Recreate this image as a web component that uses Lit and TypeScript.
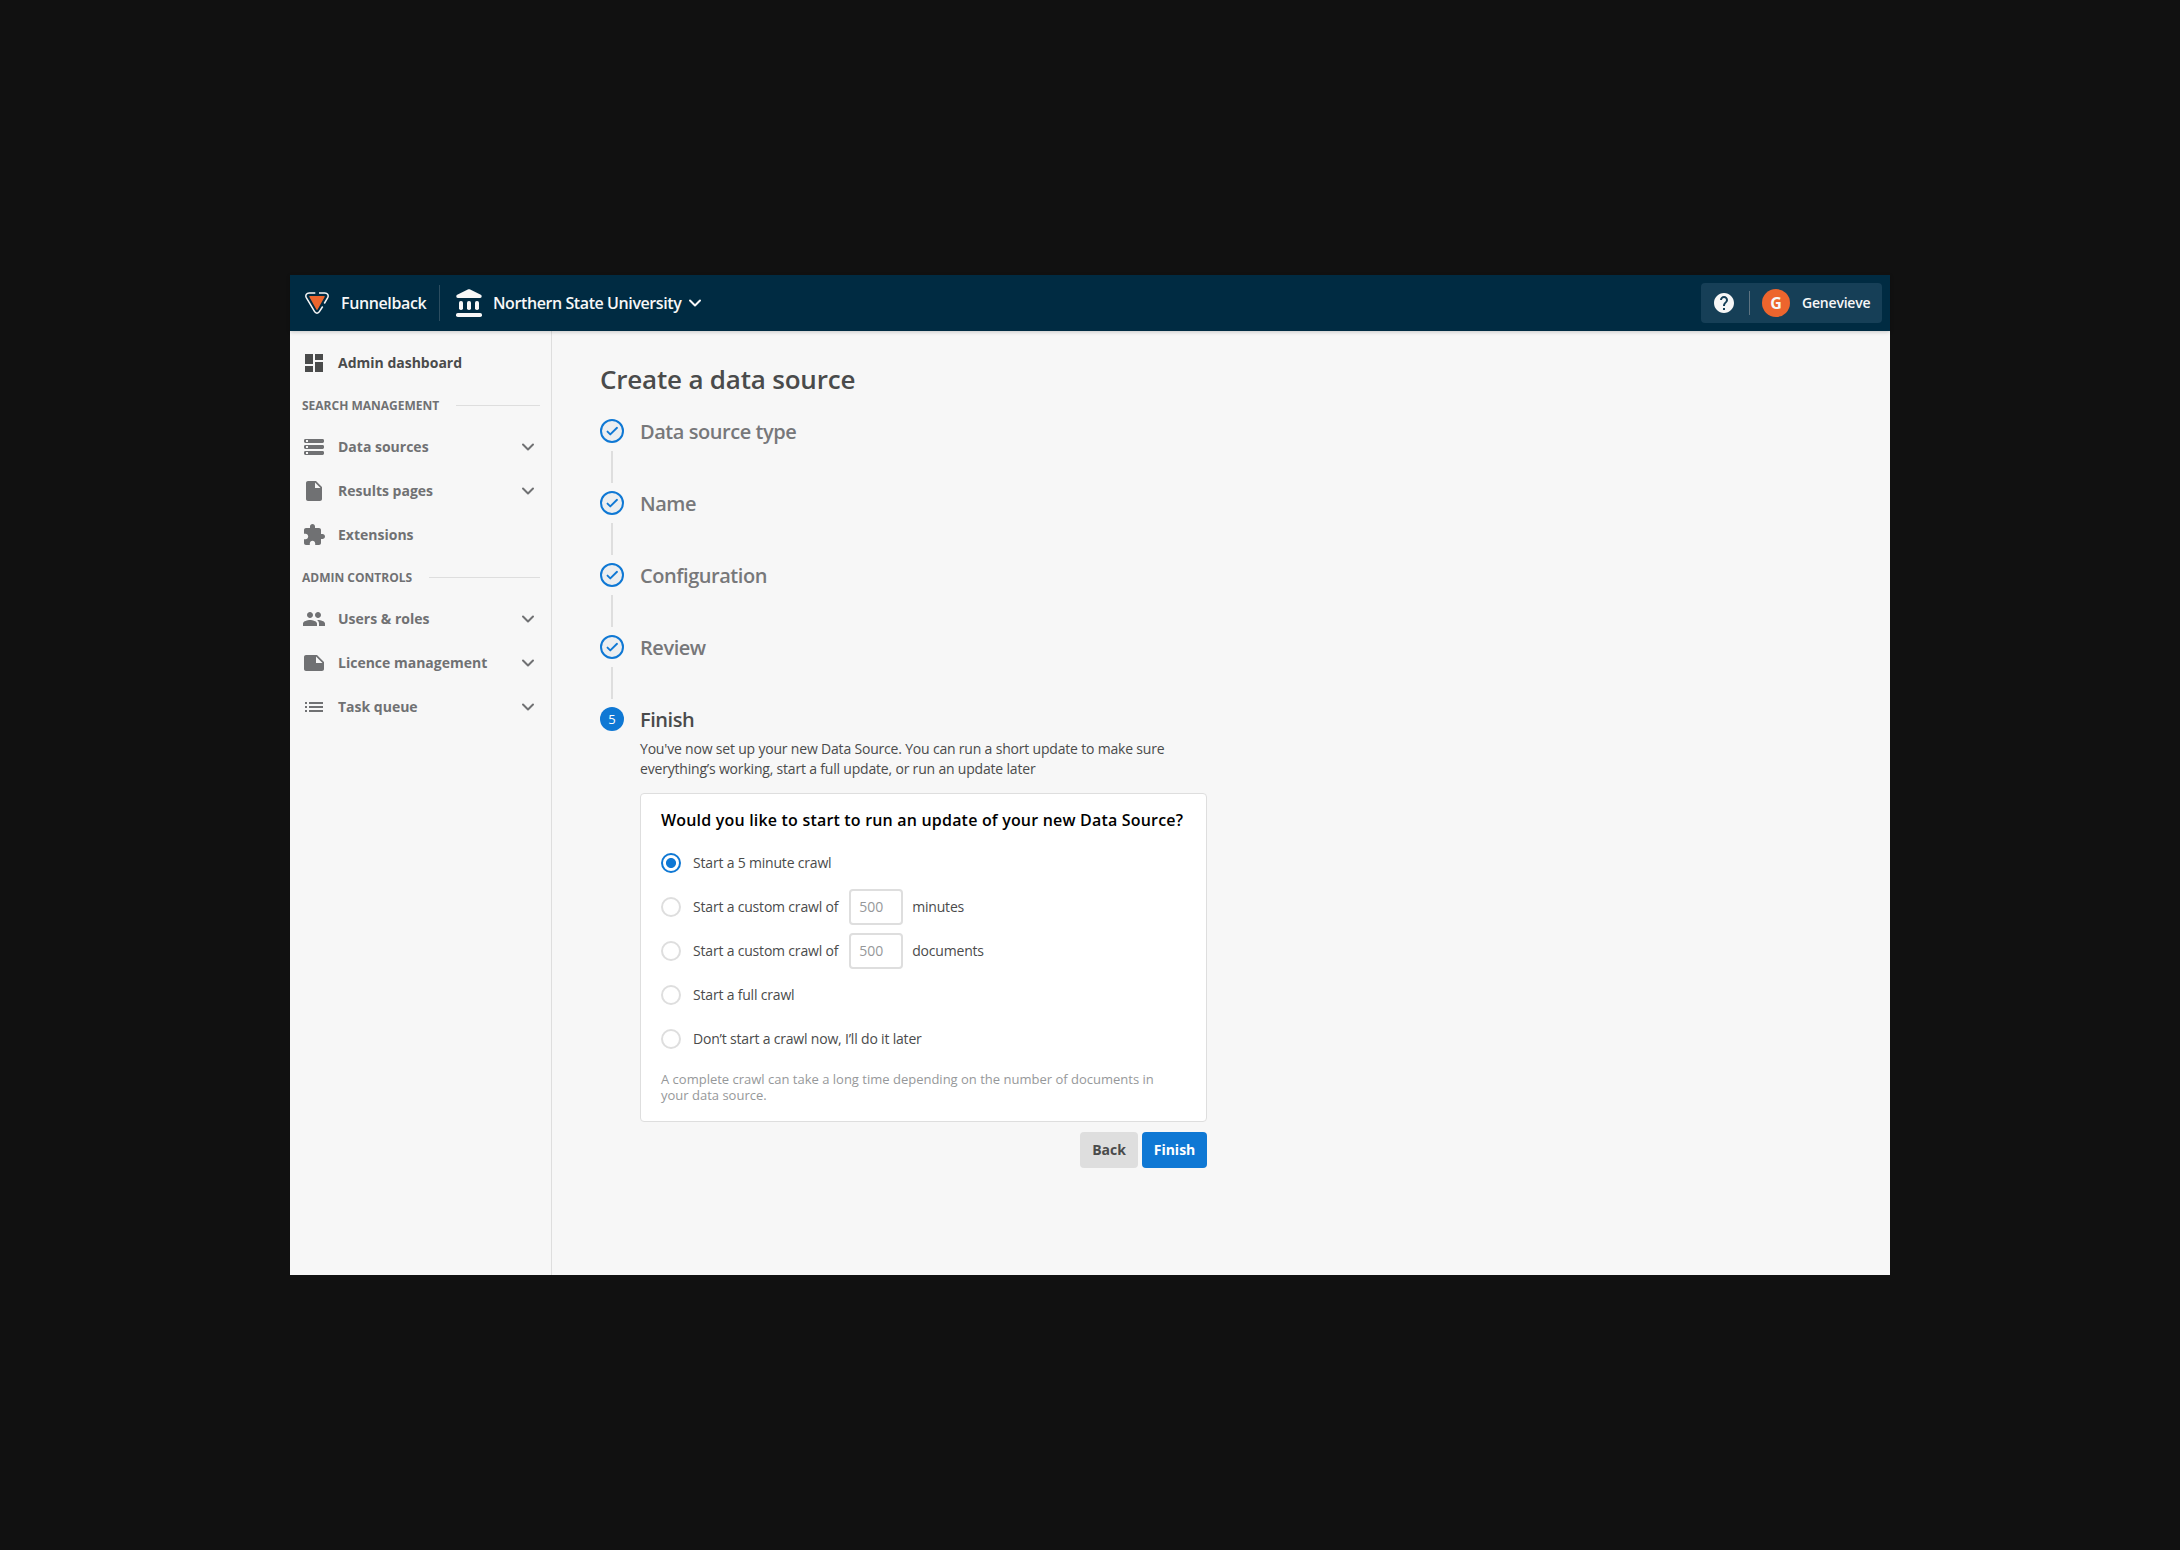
import { LitElement, html, css, svg, nothing } from "lit";
import { customElement, property, state } from "lit/decorators.js";

const ICONS: Record<string, string> = {
  dashboard: "M3 13h8V3H3v10zm0 8h8v-6H3v6zm10 0h8V11h-8v10zm0-18v6h8V3h-8z",
  file: "M6 2c-1.1 0-2 .9-2 2v16c0 1.1.9 2 2 2h12c1.1 0 2-.9 2-2V8l-6-6H6zm7 7V3.5L18.5 9H13z",
  extension:
    "M20.5 11H19V7c0-1.1-.9-2-2-2h-4V3.5C13 2.12 11.88 1 10.5 1S8 2.12 8 3.5V5H4c-1.1 0-1.99.9-1.99 2v3.8H3.5c1.49 0 2.7 1.21 2.7 2.7s-1.21 2.7-2.7 2.7H2V20c0 1.1.9 2 2 2h3.8v-1.5c0-1.49 1.21-2.7 2.7-2.7 1.49 0 2.7 1.21 2.7 2.7V22H17c1.1 0 2-.9 2-2v-4h1.500c1.380 0 2.500-1.120 2.500-2.500S21.880 11 20.500 11z",
  users:
    "M16 11c1.660 0 2.990-1.340 2.990-3S17.660 5 16 5c-1.660 0-3 1.340-3 3s1.340 3 3 3zm-8 0c1.660 0 2.990-1.340 2.990-3S9.660 5 8 5C6.340 5 5 6.340 5 8s1.340 3 3 3zm0 2c-2.330 0-7 1.170-7 3.500V19h14v-2.500c0-2.330-4.670-3.500-7-3.500zm8 0c-.29 0-.62.02-.97.05 1.160.84 1.970 1.970 1.970 3.450V19h6v-2.500c0-2.330-4.670-3.500-7-3.500z",
  licence: "M15 4H4c-1.100 0-2 .9-2 2v12c0 1.100.9 2 2 2h16c1.100 0 2-.9 2-2V11l-7-7zm-1 1.500L20.500 12H14V5.500z",
  queue: "M3 13h2v-2H3v2zm0 4h2v-2H3v2zm0-8h2V7H3v2zm4 4h14v-2H7v2zm0 4h14v-2H7v2zM7 7v2h14V7H7z",
  help: "M12 2C6.480 2 2 6.480 2 12s4.480 10 10 10 10-4.480 10-10S17.520 2 12 2zm1 17h-2v-2h2v2zm2.070-7.750l-.9.920C13.450 12.900 13 13.500 13 15h-2v-.5c0-1.100.450-2.100 1.170-2.830l1.240-1.260c.370-.360.590-.860.590-1.410 0-1.100-.9-2-2-2s-2 .9-2 2H8c0-2.210 1.790-4 4-4s4 1.790 4 4c0 .880-.360 1.680-.930 2.250z",
};

const serversIcon = svg`
  <path fill-rule="evenodd" d="M3.400 4h17.200c.8 0 1.400.6 1.400 1.400v1.200c0 .8-.6 1.400-1.400 1.400H3.400C2.600 8 2 7.400 2 6.600V5.400C2 4.600 2.600 4 3.400 4zM4 5v2h2V5zM3.400 10h17.200c.8 0 1.400.6 1.400 1.400v1.200c0 .8-.6 1.400-1.400 1.400H3.400c-.8 0-1.400-.6-1.400-1.400v-1.200c0-.8.6-1.400 1.400-1.400zM4 11v2h2v-2zM3.400 16h17.200c.8 0 1.400.6 1.400 1.400v1.200c0 .8-.6 1.400-1.400 1.400H3.400c-.8 0-1.400-.6-1.400-1.400v-1.200c0-.8.6-1.400 1.400-1.400zM4 17v2h2v-2z"></path>`;

@customElement("fb-icon")
export class FbIcon extends LitElement {
  static styles = css`
    :host {
      display: block;
      flex: none;
      width: 24px;
      height: 24px;
    }
    svg {
      display: block;
      width: 100%;
      height: 100%;
      fill: currentColor;
    }
  `;
  @property() name = "";
  render() {
    return html`<svg viewBox="0 0 24 24" aria-hidden="true">
      ${this.name === "servers" ? serversIcon : svg`<path d=${ICONS[this.name] ?? ""}></path>`}
    </svg>`;
  }
}

@customElement("fb-chevron")
export class FbChevron extends LitElement {
  static styles = css`
    :host {
      display: block;
      flex: none;
      width: 14px;
      height: 10px;
    }
    svg {
      display: block;
      fill: none;
      stroke: currentColor;
      stroke-width: 2;
      stroke-linecap: round;
      stroke-linejoin: round;
    }
  `;
  render() {
    return html`<svg width="14" height="10" viewBox="0 0 14 10"><path d="M2 2.500l5 5 5-5"></path></svg>`;
  }
}

@customElement("fb-header")
export class FbHeader extends LitElement {
  static styles = css`
    :host {
      display: flex;
      align-items: center;
      height: 56px;
      box-sizing: border-box;
      padding: 0 8px 0 15px;
      background: #002b42;
      color: #f7f7f7;
      font-size: 16px;
      font-weight: 600;
      position: relative;
      box-shadow: 0 1px 4px rgba(0, 0, 0, 0.2);
    }
    .logo {
      flex: none;
      width: 24px;
      height: 24px;
    }
    .brand {
      margin-left: 12px;
      width: 98px;
      letter-spacing: -0.38px;
    }
    .rule {
      width: 1px;
      height: 36px;
      background: #2b4d60;
    }
    .bank {
      margin-left: 15px;
      width: 28px;
      height: 30px;
    }
    .client {
      margin-left: 10px;
      width: 195px;
      white-space: nowrap;
      letter-spacing: -0.41px;
    }
    .user {
      display: flex;
      align-items: center;
      box-sizing: border-box;
      width: 181px;
      height: 40px;
      margin-left: auto;
      padding-left: 11px;
      background: #163f57;
      border-radius: 4px;
      font-size: 14px;
    }
    .split {
      width: 1px;
      height: 24px;
      margin-left: 13px;
      background: #5d7381;
    }
    .avatar {
      display: flex;
      align-items: center;
      justify-content: center;
      width: 28px;
      height: 28px;
      margin: 0 12px;
      border-radius: 50%;
      background: #ed652d;
      font-size: 16px;
      font-weight: 700;
    }
    .name {
      padding-bottom: 1px;
      letter-spacing: -0.2px;
    }
  `;
  render() {
    return html`
      <svg class="logo" viewBox="0 0 24 24">
        <path d="M5 5h14c.7 0 .9.500.6 1L12.600 18.600c-.3.500-.9.500-1.200 0L4.400 6C4.100 5.500 4.300 5 5 5z" fill="#ed652d"></path>
        <path
          d="M10.300 1.900H4.200C1.500 1.900.1 4.400 1.300 6.700l8.300 14c1.100 1.900 3.700 1.900 4.800 0l3.300-5.200M14 1.900h5.800c2.700 0 4.100 2.500 2.900 4.800l-3.400 5.800"
          fill="none"
          stroke="#f7f7f7"
          stroke-width="1.500"
        ></path>
      </svg>
      <span class="brand">Funnelback</span>
      <span class="rule"></span>
      <svg class="bank" viewBox="0 0 28 30" fill="#f7f7f7">
        <path
          d="M14 1.200c.5 0 .8.100 1.200.3l10.600 5.300c1.300.7 1.200 3.200-.6 3.200H2.800C1 10 .9 7.500 2.200 6.800l10.600-5.300c.4-.2.700-.3 1.200-.3z"
        ></path>
        <rect x="4" y="13" width="4" height="9" rx="1.800"></rect>
        <rect x="12" y="13" width="4" height="9" rx="1.800"></rect>
        <rect x="20" y="13" width="4" height="9" rx="1.800"></rect>
        <rect x="1" y="25" width="26" height="4" rx="1.800"></rect>
      </svg>
      <span class="client">Northern State University</span>
      <fb-chevron></fb-chevron>
      <div class="user">
        <fb-icon name="help"></fb-icon>
        <span class="split"></span>
        <span class="avatar">G</span>
        <span class="name">Genevieve</span>
      </div>
    `;
  }
}

interface NavItem {
  icon: string;
  label: string;
  expands?: boolean;
}
interface NavGroup {
  title: string;
  items: NavItem[];
}

@customElement("fb-sidebar")
export class FbSidebar extends LitElement {
  static styles = css`
    :host {
      display: block;
      flex: none;
      box-sizing: border-box;
      width: 262px;
      padding-top: 10px;
      border-right: 1px solid #dedede;
      color: #707173;
    }
    .item {
      display: flex;
      align-items: center;
      height: 44px;
      padding: 0 16px 0 12px;
      font-size: 14px;
      font-weight: 700;
    }
    .item fb-chevron {
      margin-left: auto;
    }
    .label {
      margin-left: 12px;
      padding-bottom: 2px;
    }
    .active {
      color: #4a4b4b;
    }
    .group {
      display: flex;
      align-items: center;
      gap: 17px;
      height: 40px;
      padding: 0 11px 0 12px;
      font-size: 12px;
      font-weight: 700;
    }
    .group::after {
      content: "";
      flex: 1;
      height: 1px;
      background: #dedede;
    }
  `;
  private groups: NavGroup[] = [
    {
      title: "SEARCH MANAGEMENT",
      items: [
        { icon: "servers", label: "Data sources", expands: true },
        { icon: "file", label: "Results pages", expands: true },
        { icon: "extension", label: "Extensions" },
      ],
    },
    {
      title: "ADMIN CONTROLS",
      items: [
        { icon: "users", label: "Users & roles", expands: true },
        { icon: "licence", label: "Licence management", expands: true },
        { icon: "queue", label: "Task queue", expands: true },
      ],
    },
  ];
  private item(i: NavItem, active = false) {
    return html`<div class="item ${active ? "active" : ""}">
      <fb-icon name=${i.icon}></fb-icon><span class="label">${i.label}</span>
      ${i.expands ? html`<fb-chevron></fb-chevron>` : nothing}
    </div>`;
  }
  render() {
    return html`
      ${this.item({ icon: "dashboard", label: "Admin dashboard" }, true)}
      ${this.groups.map((g) => html`<div class="group">${g.title}</div>${g.items.map((i) => this.item(i))}`)}
    `;
  }
}

interface CrawlOption {
  label: string;
  unit?: string;
}

@customElement("fb-wizard")
export class FbWizard extends LitElement {
  static styles = css`
    :host {
      display: block;
      flex: 1;
      padding: 30px 48px 0;
    }
    h1 {
      margin: 0;
      height: 36px;
      line-height: 36px;
      font-size: 26px;
      font-weight: 600;
      letter-spacing: -0.2px;
    }
    .steps {
      display: flex;
      flex-direction: column;
      margin-top: 22px;
    }
    .step {
      display: grid;
      grid-template-columns: 24px 567px;
      column-gap: 16px;
    }
    .done {
      height: 72px;
      color: #77787a;
    }
    .track {
      display: flex;
      flex-direction: column;
      align-items: center;
      gap: 8px;
    }
    .track::after {
      content: "";
      width: 2px;
      height: 32px;
      background: #dedede;
    }
    .current .track::after {
      display: none;
    }
    .mark {
      display: block;
      width: 24px;
      height: 24px;
    }
    .num {
      display: flex;
      align-items: center;
      justify-content: center;
      width: 24px;
      height: 24px;
      border-radius: 50%;
      background: #0f78d4;
      color: #fff;
      font-size: 13px;
      font-weight: 500;
    }
    .title {
      padding-top: 1px;
      line-height: 24px;
      font-size: 20px;
      font-weight: 600;
      letter-spacing: -0.45px;
    }
    .intro {
      margin: 7px 0 0;
      line-height: 20px;
      font-size: 14px;
      letter-spacing: -0.19px;
    }
    .card {
      box-sizing: border-box;
      height: 329px;
      margin-top: 14px;
      padding: 14px 20px 0;
      border: 1px solid #dedede;
      border-radius: 4px;
      background: #fff;
    }
    .question {
      line-height: 24px;
      font-size: 16px;
      font-weight: 600;
      letter-spacing: 0.19px;
      color: #000;
      white-space: nowrap;
    }
    .option {
      display: flex;
      align-items: center;
      height: 44px;
      font-size: 14px;
      letter-spacing: -0.19px;
    }
    .text {
      padding-bottom: 2px;
    }
    .options {
      margin-top: 9px;
    }
    .radio {
      box-sizing: border-box;
      width: 20px;
      height: 20px;
      margin-right: 12px;
      border: 2px solid #dedede;
      border-radius: 50%;
    }
    .radio.on {
      border-color: #0f78d4;
      background: radial-gradient(circle, #0f78d4 4.600px, transparent 5.400px);
    }
    .amount {
      box-sizing: border-box;
      width: 54px;
      height: 36px;
      margin: 0 9px 0 11px;
      padding: 0 8px 2px;
      border: 2px solid #dedede;
      border-radius: 4px;
      background: #fff;
      color: #96989a;
      font: inherit;
    }
    .note {
      margin: 10px 0 0;
      line-height: 16px;
      font-size: 13px;
      color: #96989a;
    }
    .actions {
      display: flex;
      justify-content: flex-end;
      gap: 4px;
      margin-top: 10px;
    }
    .button {
      height: 36px;
      padding: 0 0 2px;
      border: 0;
      border-radius: 4px;
      font: inherit;
      font-size: 14px;
      font-weight: 700;
      width: 58px;
      background: #dedede;
      color: #4a4b4b;
    }
    .primary {
      width: 65px;
      background: #0f78d4;
      color: #fff;
    }
  `;
  @state() private selected = 0;
  private done = ["Data source type", "Name", "Configuration", "Review"];
  private options: CrawlOption[] = [
    { label: "Start a 5 minute crawl" },
    { label: "Start a custom crawl of", unit: "minutes" },
    { label: "Start a custom crawl of", unit: "documents" },
    { label: "Start a full crawl" },
    { label: "Don’t start a crawl now, I’ll do it later" },
  ];
  render() {
    return html`
      <h1>Create a data source</h1>
      <div class="steps">
        ${this.done.map(
          (t) => html`<div class="step done">
            <div class="track">
              <svg class="mark" viewBox="0 0 24 24">
                <circle cx="12" cy="12" r="11" fill="#eceef0" stroke="#0f78d4" stroke-width="2"></circle>
                <path
                  d="M7.500 12.600l2.800 2.800 6.700-6.600"
                  fill="none"
                  stroke="#0f78d4"
                  stroke-width="1.900"
                  stroke-linecap="round"
                  stroke-linejoin="round"
                ></path>
              </svg>
            </div>
            <div class="title">${t}</div>
          </div>`
        )}
        <div class="step current">
          <div class="track"><span class="num">5</span></div>
          <div>
            <div class="title">Finish</div>
            <p class="intro">
              You've now set up your new Data Source. You can run a short update to make sure<br />everything’s working,
              start a full update, or run an update later
            </p>
            <div class="card">
              <div class="question">Would you like to start to run an update of your new Data Source?</div>
              <div class="options">
                ${this.options.map(
                  (o, i) => html`<div class="option" @click=${() => (this.selected = i)}>
                    <span class="radio ${i === this.selected ? "on" : ""}"></span>
                    <span class="text">${o.label}</span>
                    ${o.unit ? html`<input class="amount" value="500" /><span class="text">${o.unit}</span>` : nothing}
                  </div>`
                )}
              </div>
              <p class="note">
                A complete crawl can take a long time depending on the number of documents in<br />your data source.
              </p>
            </div>
            <div class="actions">
              <button class="button">Back</button>
              <button class="button primary">Finish</button>
            </div>
          </div>
        </div>
      </div>
    `;
  }
}

@customElement("app-root")
export class AppRoot extends LitElement {
  static styles = css`
    :host {
      display: flex;
      align-items: center;
      justify-content: center;
      width: 100%;
      height: 1550px;
      background: #111;
      font-family: "Open Sans", "Noto Sans", sans-serif;
      color: #4a4b4b;
    }
    .window {
      display: flex;
      flex-direction: column;
      width: 1600px;
      height: 1000px;
      background: #f7f7f7;
    }
    .body {
      display: flex;
      flex: 1;
    }
  `;
  render() {
    return html`<div class="window">
      <fb-header></fb-header>
      <div class="body"><fb-sidebar></fb-sidebar><fb-wizard></fb-wizard></div>
    </div>`;
  }
}
